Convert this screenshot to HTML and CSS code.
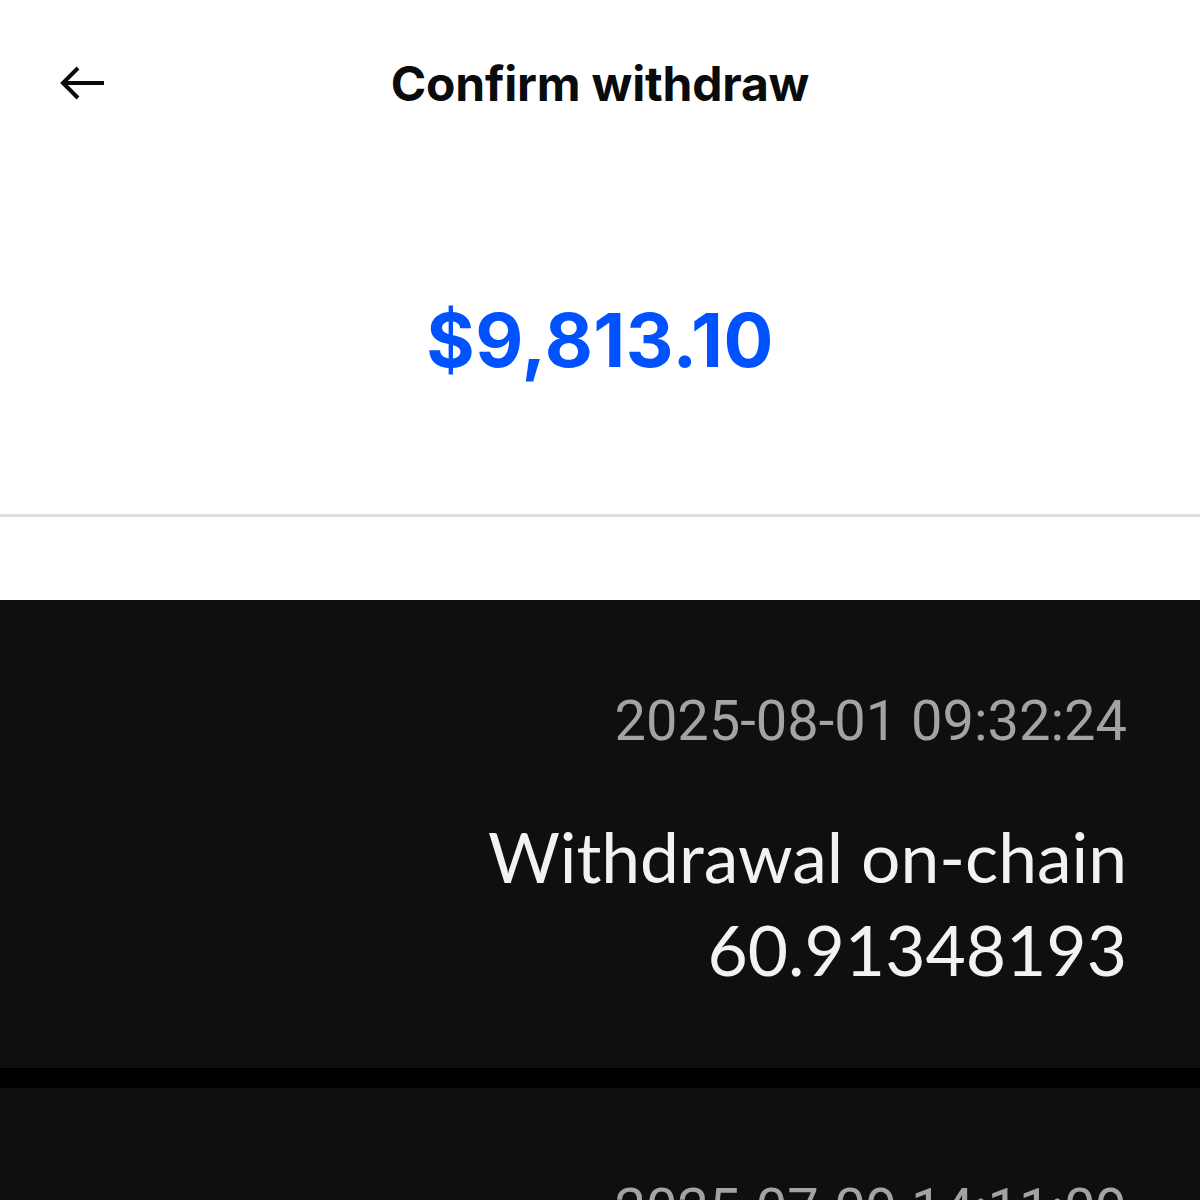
FILE: index.html
```html
<!DOCTYPE html>
<html lang="en">
<head>
    <meta charset="UTF-8">
    <meta name="viewport" content="width=device-width, initial-scale=1.0">
    <title>Confirm withdraw</title>
    <link rel="stylesheet" href="styles.css">
</head>

<body>
    <div class="screen">
        <header class="top-bar">
            <button class="back-button" aria-label="Back">
                <svg width="48" height="36" viewBox="0 0 48 36">
                    <path d="M3 18 H44 M18 3 L3 18 L18 33" fill="none" stroke="#0a0b0d" stroke-width="4"/>
                </svg>
            </button>
            <h1>Confirm withdraw</h1>
        </header>

        <div class="amount">$9,813.10</div>
        <div class="divider"></div>
        <div class="spacer"></div>

        <div class="history">
            <div class="record">
                <div class="record-time">2025-08-01 09:32:24</div>
                <div class="record-title">Withdrawal on-chain</div>
                <div class="record-value">60.91348193</div>
            </div>
            <div class="record">
                <div class="record-time">2025-07-09 14:11:09</div>
                <div class="record-title">Withdrawal on-chain</div>
                <div class="record-value">37.50000000</div>
            </div>
        </div>
    </div>
</body>

</html>
```

FILE: styles.css
```css
/* General styles */
body {
    margin: 0;
    padding: 0;
    background-color: #ffffff;
    font-family: Inter, "Liberation Sans", sans-serif;
    color: #0a0b0d;
    overflow: hidden;
}

.screen {
    width: 1200px;
    height: 1200px;
    overflow: hidden;
    display: flex;
    flex-direction: column;
}

/* Header */
.top-bar {
    position: relative;
    height: 166px;
    display: flex;
    align-items: center;
    justify-content: center;
    flex-shrink: 0;
}

.top-bar h1 {
    margin: 0;
    font-size: 48px;
    font-weight: 700;
    letter-spacing: -0.2px;
}

.back-button {
    position: absolute;
    left: 60px;
    top: 65px;
    padding: 0;
    border: none;
    background: none;
    display: flex;
}

/* Amount */
.amount {
    height: 348px;
    display: flex;
    align-items: center;
    justify-content: center;
    font-size: 74px;
    font-weight: 700;
    color: #0052ff;
    letter-spacing: 0.5px;
    flex-shrink: 0;
}

.divider {
    height: 3px;
    background-color: #dedfe1;
    flex-shrink: 0;
}

.spacer {
    height: 83px;
    flex-shrink: 0;
}

/* History cards */
.history {
    display: flex;
    flex-direction: column;
    gap: 20px;
    background-color: #000000;
    flex-shrink: 0;
}

.record {
    height: 468px;
    background-color: #0f0f0f;
    padding: 89px 73px 0 0;
    box-sizing: border-box;
    text-align: right;
}

.record-time {
    font-family: Roboto, sans-serif;
    font-size: 56px;
    color: #a3a3a3;
    line-height: 64px;
}

.record-title,
.record-value {
    font-family: Lato, sans-serif;
    font-size: 69.5px;
    color: #f2f2f2;
    line-height: 93px;
}

.record-title {
    margin-top: 57px;
}
```
